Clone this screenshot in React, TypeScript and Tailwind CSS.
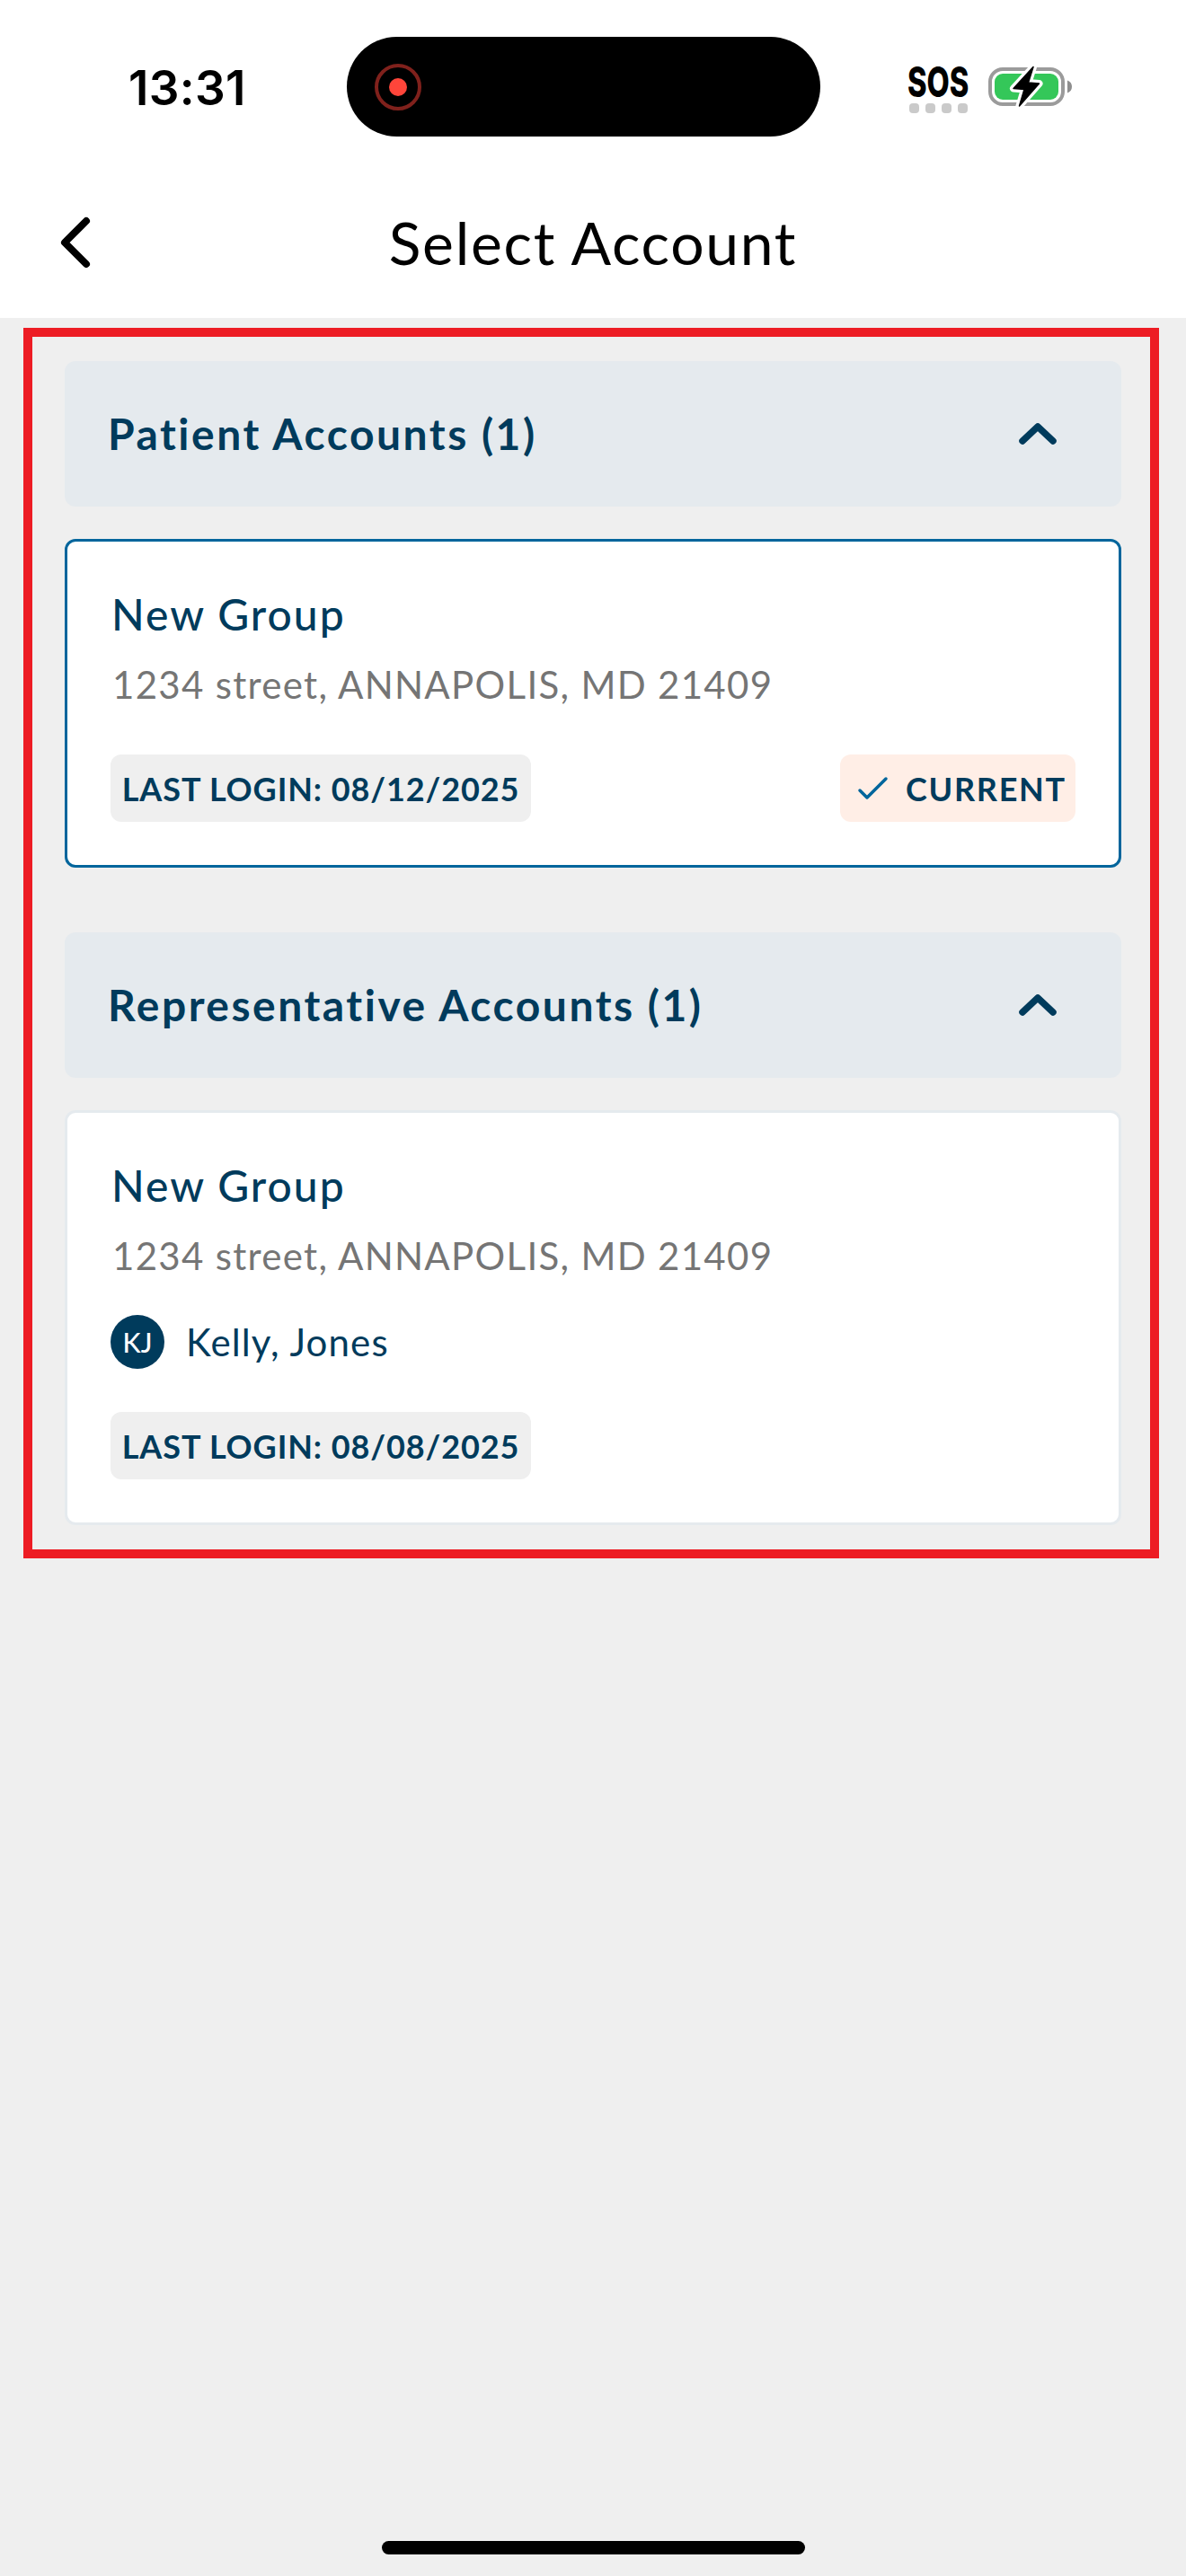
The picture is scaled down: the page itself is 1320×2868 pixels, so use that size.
import { useState } from 'react';

interface Account {
  name: string;
  address: string;
  lastLogin: string;
  current?: boolean;
  owner?: { initials: string; name: string };
}

const patientAccounts: Account[] = [
  { name: 'New Group', address: '1234 street, ANNAPOLIS, MD 21409', lastLogin: '08/12/2025', current: true },
];

const representativeAccounts: Account[] = [
  {
    name: 'New Group',
    address: '1234 street, ANNAPOLIS, MD 21409',
    lastLogin: '08/08/2025',
    owner: { initials: 'KJ', name: 'Kelly, Jones' },
  },
];

function BatteryIcon() {
  const bolt = 'M51 1.5 L29 25.5 L41 26.5 L35.5 45 L57.5 20 L45.5 19 Z';
  return (
    <svg width="96" height="47" viewBox="0 0 96 47" fill="none">
      <rect x="3" y="4" width="81" height="39" rx="14" stroke="#9b9b9b" strokeWidth="4" />
      <rect x="8" y="9" width="71" height="29" rx="9" fill="#34c759" />
      <path d="M89 16.5 C92.5 18 94 20 94 23.5 C94 27 92.5 29 89 30.5 Z" fill="#8e8e8e" />
      <path d={bolt} fill="#fff" stroke="#fff" strokeWidth="8" strokeLinejoin="round" />
      <path d={bolt} fill="#000" stroke="#000" strokeWidth="1.5" strokeLinejoin="round" />
    </svg>
  );
}

function StatusBar() {
  return (
    <div className="flex h-[194px] items-start pt-[41px] font-['Inter',sans-serif] text-black">
      <div className="w-[386px] pl-[143px] pt-[27px] text-[53px] font-semibold leading-[60px] tracking-[0.3px]">13:31</div>
      <div className="flex h-[111px] w-[527px] items-center rounded-full bg-black pl-[31px]">
        <div className="flex h-[52px] w-[52px] items-center justify-center rounded-full border-[4px] border-[#80211c]">
          <div className="h-5 w-5 rounded-full bg-[#ff453a]" />
        </div>
      </div>
      <div className="ml-[97px] mt-[26px] w-[70px]">
        <div className="h-12 origin-left scale-x-[0.71] whitespace-nowrap text-[46px] font-extrabold leading-[48px]">SOS</div>
        <div className="flex justify-between pl-[2px] pr-[3px]">
          {[0, 1, 2, 3].map((i) => (
            <span key={i} className="h-[11px] w-[11px] rounded-[4px] bg-[#cacaca]" />
          ))}
        </div>
      </div>
      <div className="ml-[19px] mt-[32px]">
        <BatteryIcon />
      </div>
    </div>
  );
}

function AccountCard({ account }: { account: Account }) {
  return (
    <div
      className={`rounded-[12px] border-[3px] bg-white px-[48px] pb-[48px] pt-[48px] ${
        account.current ? 'border-[#00659c]' : 'border-[#e5eaee]'
      }`}
    >
      <div className="pl-[1px] text-[48px] font-medium leading-[66px] tracking-[2px] text-[#003b5c]">{account.name}</div>
      <div className="mt-[15px] pl-[2px] text-[42px] leading-[60px] tracking-[1.3px] text-[#757575]">{account.address}</div>

      {account.owner && (
        <div className="mt-[36px] flex h-[60px] items-center">
          <div className="flex h-[60px] w-[60px] items-center justify-center rounded-full bg-[#003b5c] text-[30px] font-medium text-white">
            {account.owner.initials}
          </div>
          <div className="ml-[24px] text-[42px] leading-[60px] tracking-[1.15px] text-[#003b5c]">{account.owner.name}</div>
        </div>
      )}

      <div className="mt-[48px] flex h-[75px] items-center justify-between">
        <div className="flex h-[75px] w-[468px] items-center justify-center whitespace-nowrap rounded-[12px] bg-[#efefef] text-[36px] font-bold tracking-[0.9px] text-[#003b5c]">
          LAST LOGIN: {account.lastLogin}
        </div>
        {account.current && (
          <div className="flex h-[75px] w-[262px] items-center rounded-[12px] bg-[#ffeee6] pl-[19px]">
            <svg width="36" height="30" viewBox="0 0 36 30" fill="none">
              <path d="M3 17 L11 25 L32 4" stroke="#00659c" strokeWidth="3.5" strokeLinecap="round" strokeLinejoin="round" />
            </svg>
            <span className="ml-[18px] text-[36px] font-bold tracking-[1.7px] text-[#003b5c]">CURRENT</span>
          </div>
        )}
      </div>
    </div>
  );
}

function AccountSection({ title, accounts }: { title: string; accounts: Account[] }) {
  const [open, setOpen] = useState(true);

  return (
    <section>
      <button
        type="button"
        onClick={() => setOpen(!open)}
        className="flex h-[162px] w-full items-center justify-between rounded-[12px] bg-[#e5eaee] pl-[48px] pr-[69px] text-[#003b5c]"
      >
        <span className="text-[48px] font-bold leading-[66px] tracking-[2.5px]">
          {title} ({accounts.length})
        </span>
        <svg width="48" height="30" viewBox="0 0 48 30" fill="none" className={open ? '' : 'rotate-180'}>
          <path d="M7 23 L24 7 L41 23" stroke="currentColor" strokeWidth="7.5" strokeLinecap="round" strokeLinejoin="round" />
        </svg>
      </button>
      {open && (
        <div className="mt-[36px] space-y-[36px]">
          {accounts.map((account) => (
            <AccountCard key={account.address + account.lastLogin} account={account} />
          ))}
        </div>
      )}
    </section>
  );
}

export default function App() {
  return (
    <div className="flex h-[2868px] w-[1320px] flex-col bg-[#efefef] font-['Lato',sans-serif]">
      <header className="h-[354px] bg-white">
        <StatusBar />
        <div className="flex h-[151px] items-center px-[60px]">
          <svg width="48" height="64" viewBox="0 0 48 64" fill="none">
            <path d="M36 8 L12 32 L36 56" stroke="#000" strokeWidth="8" strokeLinecap="round" strokeLinejoin="round" />
          </svg>
          <h1 className="mr-[48px] flex-1 text-center text-[66px] leading-[80px] tracking-[1.7px] text-black">Select Account</h1>
        </div>
      </header>

      {/* Account list */}
      <main className="ml-[26px] mr-[30px] mt-[11px] space-y-[72px] border-[10px] border-[#ed1c24] pb-[27px] pl-[36px] pr-[32px] pt-[27px]">
        <AccountSection title="Patient Accounts" accounts={patientAccounts} />
        <AccountSection title="Representative Accounts" accounts={representativeAccounts} />
      </main>

      {/* Home indicator */}
      <div className="mx-auto mb-6 mt-auto h-[15px] w-[471px] rounded-full bg-black" />
    </div>
  );
}
